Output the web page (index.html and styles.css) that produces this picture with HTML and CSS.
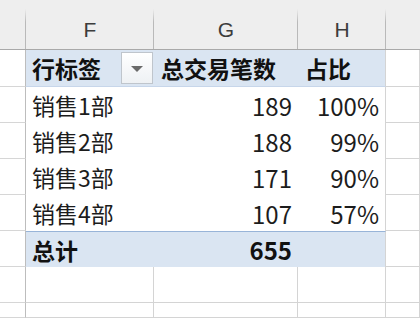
FILE: index.html
```html
<!DOCTYPE html>
<html lang="zh">
<head>
<meta charset="utf-8">
<link rel="stylesheet" href="styles.css">
</head>
<body>
<div class="sheet">
  <div class="ch corner"></div>
  <div class="ch">F</div>
  <div class="ch">G</div>
  <div class="ch">H</div>
  <div class="ch last"></div>

  <div class="rh"></div>
  <div class="ph pf"><span>行标签</span><span class="dd"><i class="tri"></i></span></div>
  <div class="ph">总交易笔数</div>
  <div class="ph ph-end">占比</div>
  <div class="gc"></div>

  <div class="rh"></div>
  <div class="dc">销售1部</div>
  <div class="dc num">189</div>
  <div class="dc num ph-end">100%</div>
  <div class="gc"></div>

  <div class="rh"></div>
  <div class="dc">销售2部</div>
  <div class="dc num">188</div>
  <div class="dc num ph-end">99%</div>
  <div class="gc"></div>

  <div class="rh"></div>
  <div class="dc">销售3部</div>
  <div class="dc num">171</div>
  <div class="dc num ph-end">90%</div>
  <div class="gc"></div>

  <div class="rh"></div>
  <div class="dc">销售4部</div>
  <div class="dc num">107</div>
  <div class="dc num ph-end">57%</div>
  <div class="gc"></div>

  <div class="rh"></div>
  <div class="tc">总计</div>
  <div class="tc num">655</div>
  <div class="tc ph-end"></div>
  <div class="gc"></div>

  <div class="rh"></div>
  <div class="gc"></div>
  <div class="gc"></div>
  <div class="gc"></div>
  <div class="gc"></div>

  <div class="rh"></div>
  <div class="gc"></div>
  <div class="gc"></div>
  <div class="gc"></div>
  <div class="gc"></div>
</div>
</body>
</html>
```
FILE: styles.css
```css
html, body {
  margin: 0;
  padding: 0;
  background: #ffffff;
}
body {
  width: 420px;
  height: 318px;
  overflow: hidden;
  font-family: "Noto Sans CJK SC", "Noto Sans", sans-serif;
  color: #1c1c1c;
}
.sheet {
  display: grid;
  grid-template-columns: 26px 128px 144px 88px 34px;
  grid-template-rows: 50px 37px 36px 36px 36px 36px 36px 36px 15px;
  width: 420px;
  height: 318px;
}
.sheet > div {
  box-sizing: border-box;
}
.ch {
  background-color: #eeeeee;
  background-image: linear-gradient(to bottom, rgba(180,180,180,0) 18%, #b9b9b9 45%, #b9b9b9 100%);
  background-size: 1px 100%;
  background-position: right top;
  background-repeat: no-repeat;
  border-bottom: 1px solid #a9a9a9;
  display: flex;
  align-items: center;
  justify-content: center;
  padding-top: 10px;
  font-family: "Liberation Sans", "DejaVu Sans", sans-serif;
  font-size: 21px;
  color: #3c3c3c;
}
.ch.last {
  background-image: none;
}
.rh {
  border-right: 1px solid #bdbdbd;
  border-bottom: 1px solid #d6d6d6;
  background: #ffffff;
}
.gc {
  border-right: 1px solid #d4d4d4;
  border-bottom: 1px solid #d4d4d4;
  background: #ffffff;
}
.ph {
  background: #dae5f2;
  border-bottom: 1px solid #c7d6ea;
  font-weight: 700;
  font-size: 23px;
  display: flex;
  align-items: center;
  padding-left: 7px;
  color: #111111;
  white-space: nowrap;
}
.ph-end {
  border-right: 1px solid #d4d4d4;
}
.pf {
  padding-left: 6px;
  padding-right: 1px;
}
.dd {
  margin-left: auto;
  width: 32px;
  height: 32px;
  box-sizing: border-box;
  border: 1px solid #bfc5cc;
  background: linear-gradient(to bottom, #ffffff, #eef1f4);
  display: flex;
  align-items: center;
  justify-content: center;
}
.tri {
  width: 0;
  height: 0;
  border-left: 6px solid transparent;
  border-right: 6px solid transparent;
  border-top: 6px solid #6a6a6a;
  margin-top: 1px;
}
.dc {
  font-size: 23px;
  display: flex;
  align-items: center;
  padding-left: 6px;
  padding-right: 6px;
  background: #ffffff;
  white-space: nowrap;
}
.num {
  justify-content: flex-end;
  font-size: 24px;
}
.tc {
  background: #dae5f2;
  border-top: 1px solid #98b4d8;
  font-size: 23px;
  font-weight: 700;
  display: flex;
  align-items: center;
  padding-left: 6px;
  padding-right: 6px;
  color: #111111;
}
.tc.num {
  font-size: 24px;
}
```
